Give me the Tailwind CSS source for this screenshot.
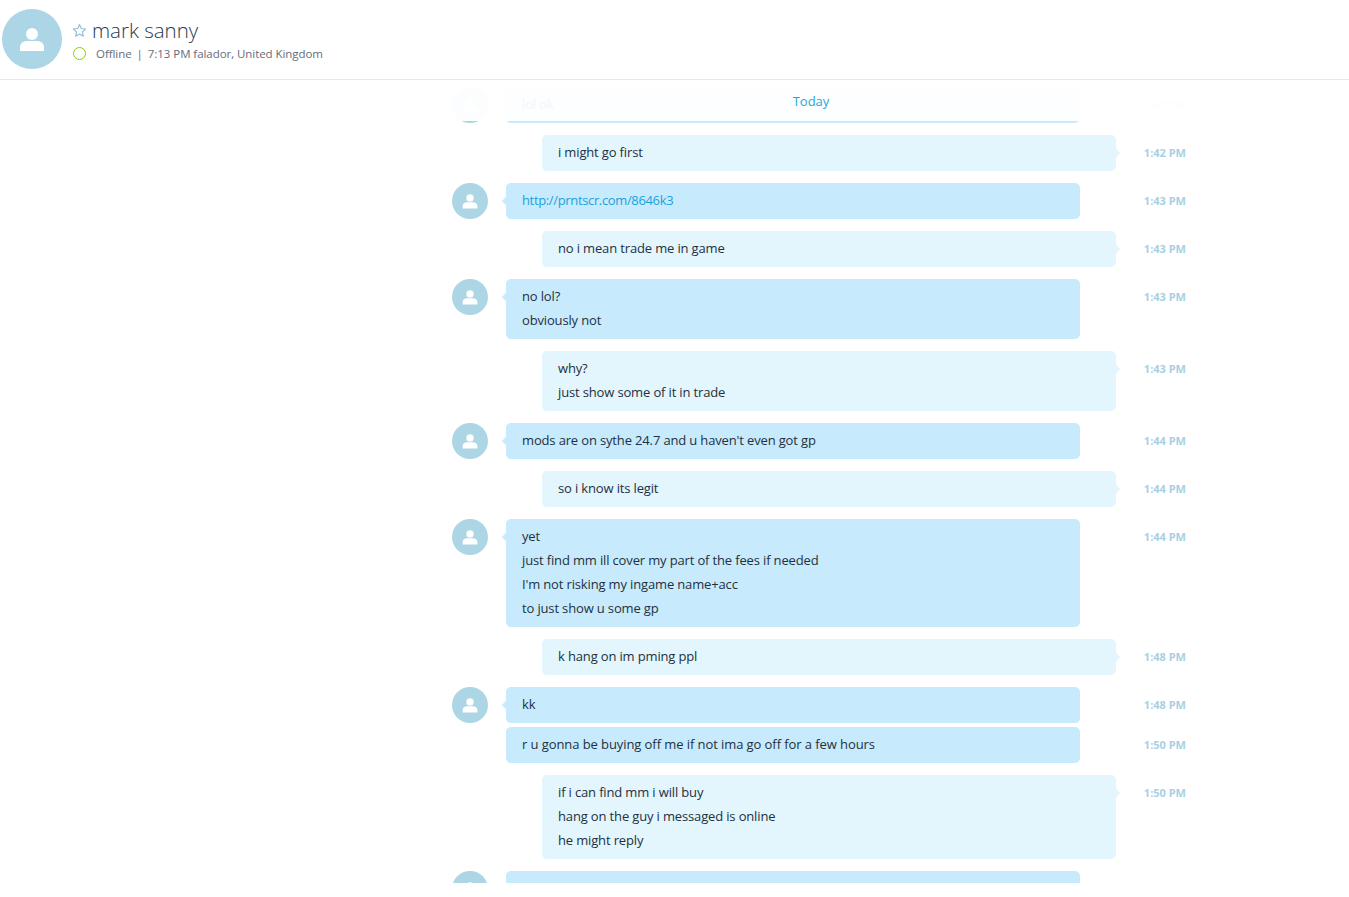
<!DOCTYPE html>
<html lang="en">
<head>
    <meta charset="UTF-8">
    <title>mark sanny</title>
    <script src="https://cdn.jsdelivr.net/npm/@tailwindcss/browser@4"></script>
</head>
<body class="bg-white font-['Open_Sans',sans-serif] text-[13px] tracking-[-0.15px] text-[#24303f]">
    <header class="h-20 border-b border-[#e6e8e9] flex items-start pt-[9px] pl-[2px]">
        <div class="w-[60px] h-[60px] rounded-full bg-[#acd5e6] flex items-center justify-center shrink-0">
            <svg class="w-[26px] h-[26px]" viewBox="0 0 26 26" fill="#fff"><circle cx="13" cy="8" r="6"/><path d="M1 25v-4c0-4 4-6 7-6h10c3 0 7 2 7 6v4z"/></svg>
        </div>
        <div class="ml-[10px]">
            <div class="flex items-center h-[28px] mt-[7px]">
                <svg class="w-[15px] h-[15px] mt-[1px]" viewBox="0 0 24 24" fill="none" stroke="#8fbdd6" stroke-width="1.8" stroke-linejoin="round"><path d="M12 2.5l2.9 6.3 6.9.8-5.1 4.7 1.4 6.8-6.1-3.4-6.1 3.4 1.4-6.8-5.1-4.7 6.9-.8z"/></svg>
                <span class="ml-[5px] text-[20.5px] tracking-normal leading-[28px] font-light text-[#2a3a52]">mark sanny</span>
            </div>
            <div class="flex items-center h-[18px] mt-[1px] text-[11.5px] tracking-[-0.06px] text-[#666c7c]">
                <span class="w-[13px] h-[13px] ml-[1px] mt-[-1px] rounded-full border-[1.5px] border-[#8fc31f]"></span>
                <span class="ml-[10px] mt-[-1px]">Offline</span>
                <span class="ml-[5px]">|</span>
                <span class="ml-[5px] mt-[-1px]">7:13 PM falador, United Kingdom</span>
            </div>
        </div>
    </header>

    <main class="relative h-[803px] overflow-hidden">
        <!-- sticky date label, fades the row scrolled under it -->
        <div class="absolute top-0 left-0 w-full h-[41px] pt-[2px] bg-white/95 z-10 flex items-center justify-center pl-[273px] tracking-normal text-[#1ea7e1]">Today</div>

        <div class="ml-[452px] w-[734px] pt-[7px] flex flex-col gap-3">
            <div class="flex items-start">
                <div class="w-[36px] h-[36px] rounded-full bg-[#acd5e6] flex items-center justify-center"><svg class="w-4 h-4" viewBox="0 0 26 26" fill="#fff"><circle cx="13" cy="8" r="6"/><path d="M1 25v-4c0-4 4-6 7-6h10c3 0 7 2 7 6v4z"/></svg></div>
                <div class="relative ml-[18px] w-[574px] px-4 pt-[5px] pb-[7px] leading-6 rounded-[5px] bg-[#c7ebfc]">lol ok</div>
                <div class="ml-auto pt-[9px] text-[11px] tracking-normal leading-[18px] font-bold text-[#a9cfe3]">1:42 PM</div>
            </div>

            <div class="flex items-start">
                <div class="relative ml-[90px] w-[574px] px-4 pt-[5px] pb-[7px] leading-6 rounded-[5px] bg-[#e3f5fd]">i might go first<span class="absolute right-[-3px] top-[15px] w-[6px] h-[6px] rotate-45 bg-[#e3f5fd]"></span></div>
                <div class="ml-auto pt-[9px] text-[11px] tracking-normal leading-[18px] font-bold text-[#a9cfe3]">1:42 PM</div>
            </div>

            <div class="flex items-start">
                <div class="w-[36px] h-[36px] rounded-full bg-[#acd5e6] flex items-center justify-center"><svg class="w-4 h-4" viewBox="0 0 26 26" fill="#fff"><circle cx="13" cy="8" r="6"/><path d="M1 25v-4c0-4 4-6 7-6h10c3 0 7 2 7 6v4z"/></svg></div>
                <div class="relative ml-[18px] w-[574px] px-4 pt-[5px] pb-[7px] leading-6 rounded-[5px] bg-[#c7ebfc] tracking-[-0.35px] text-[#1ea0dc]">http://prntscr.com/8646k3<span class="absolute left-[-3px] top-[15px] w-[6px] h-[6px] rotate-45 bg-[#c7ebfc]"></span></div>
                <div class="ml-auto pt-[9px] text-[11px] tracking-normal leading-[18px] font-bold text-[#a9cfe3]">1:43 PM</div>
            </div>

            <div class="flex items-start">
                <div class="relative ml-[90px] w-[574px] px-4 pt-[5px] pb-[7px] leading-6 rounded-[5px] bg-[#e3f5fd]">no i mean trade me in game<span class="absolute right-[-3px] top-[15px] w-[6px] h-[6px] rotate-45 bg-[#e3f5fd]"></span></div>
                <div class="ml-auto pt-[9px] text-[11px] tracking-normal leading-[18px] font-bold text-[#a9cfe3]">1:43 PM</div>
            </div>

            <div class="flex items-start">
                <div class="w-[36px] h-[36px] rounded-full bg-[#acd5e6] flex items-center justify-center"><svg class="w-4 h-4" viewBox="0 0 26 26" fill="#fff"><circle cx="13" cy="8" r="6"/><path d="M1 25v-4c0-4 4-6 7-6h10c3 0 7 2 7 6v4z"/></svg></div>
                <div class="relative ml-[18px] w-[574px] px-4 pt-[5px] pb-[7px] leading-6 rounded-[5px] bg-[#c7ebfc]">no lol?<br>obviously not<span class="absolute left-[-3px] top-[15px] w-[6px] h-[6px] rotate-45 bg-[#c7ebfc]"></span></div>
                <div class="ml-auto pt-[9px] text-[11px] tracking-normal leading-[18px] font-bold text-[#a9cfe3]">1:43 PM</div>
            </div>

            <div class="flex items-start">
                <div class="relative ml-[90px] w-[574px] px-4 pt-[5px] pb-[7px] leading-6 rounded-[5px] bg-[#e3f5fd]">why?<br>just show some of it in trade<span class="absolute right-[-3px] top-[15px] w-[6px] h-[6px] rotate-45 bg-[#e3f5fd]"></span></div>
                <div class="ml-auto pt-[9px] text-[11px] tracking-normal leading-[18px] font-bold text-[#a9cfe3]">1:43 PM</div>
            </div>

            <div class="flex items-start">
                <div class="w-[36px] h-[36px] rounded-full bg-[#acd5e6] flex items-center justify-center"><svg class="w-4 h-4" viewBox="0 0 26 26" fill="#fff"><circle cx="13" cy="8" r="6"/><path d="M1 25v-4c0-4 4-6 7-6h10c3 0 7 2 7 6v4z"/></svg></div>
                <div class="relative ml-[18px] w-[574px] px-4 pt-[5px] pb-[7px] leading-6 rounded-[5px] bg-[#c7ebfc]">mods are on sythe 24.7 and u haven't even got gp<span class="absolute left-[-3px] top-[15px] w-[6px] h-[6px] rotate-45 bg-[#c7ebfc]"></span></div>
                <div class="ml-auto pt-[9px] text-[11px] tracking-normal leading-[18px] font-bold text-[#a9cfe3]">1:44 PM</div>
            </div>

            <div class="flex items-start">
                <div class="relative ml-[90px] w-[574px] px-4 pt-[5px] pb-[7px] leading-6 rounded-[5px] bg-[#e3f5fd]">so i know its legit<span class="absolute right-[-3px] top-[15px] w-[6px] h-[6px] rotate-45 bg-[#e3f5fd]"></span></div>
                <div class="ml-auto pt-[9px] text-[11px] tracking-normal leading-[18px] font-bold text-[#a9cfe3]">1:44 PM</div>
            </div>

            <div class="flex items-start">
                <div class="w-[36px] h-[36px] rounded-full bg-[#acd5e6] flex items-center justify-center"><svg class="w-4 h-4" viewBox="0 0 26 26" fill="#fff"><circle cx="13" cy="8" r="6"/><path d="M1 25v-4c0-4 4-6 7-6h10c3 0 7 2 7 6v4z"/></svg></div>
                <div class="relative ml-[18px] w-[574px] px-4 pt-[5px] pb-[7px] leading-6 rounded-[5px] bg-[#c7ebfc]">yet<br>just find mm ill cover my part of the fees if needed<br>I'm not risking my ingame name+acc<br>to just show u some gp<span class="absolute left-[-3px] top-[15px] w-[6px] h-[6px] rotate-45 bg-[#c7ebfc]"></span></div>
                <div class="ml-auto pt-[9px] text-[11px] tracking-normal leading-[18px] font-bold text-[#a9cfe3]">1:44 PM</div>
            </div>

            <div class="flex items-start">
                <div class="relative ml-[90px] w-[574px] px-4 pt-[5px] pb-[7px] leading-6 rounded-[5px] bg-[#e3f5fd]">k hang on im pming ppl<span class="absolute right-[-3px] top-[15px] w-[6px] h-[6px] rotate-45 bg-[#e3f5fd]"></span></div>
                <div class="ml-auto pt-[9px] text-[11px] tracking-normal leading-[18px] font-bold text-[#a9cfe3]">1:48 PM</div>
            </div>

            <div class="flex flex-col gap-1">
                <div class="flex items-start">
                    <div class="w-[36px] h-[36px] rounded-full bg-[#acd5e6] flex items-center justify-center"><svg class="w-4 h-4" viewBox="0 0 26 26" fill="#fff"><circle cx="13" cy="8" r="6"/><path d="M1 25v-4c0-4 4-6 7-6h10c3 0 7 2 7 6v4z"/></svg></div>
                    <div class="relative ml-[18px] w-[574px] px-4 pt-[5px] pb-[7px] leading-6 rounded-[5px] bg-[#c7ebfc]">kk<span class="absolute left-[-3px] top-[15px] w-[6px] h-[6px] rotate-45 bg-[#c7ebfc]"></span></div>
                    <div class="ml-auto pt-[9px] text-[11px] tracking-normal leading-[18px] font-bold text-[#a9cfe3]">1:48 PM</div>
                </div>
                <div class="flex items-start">
                    <div class="ml-[54px] w-[574px] px-4 pt-[5px] pb-[7px] leading-6 rounded-[5px] bg-[#c7ebfc] tracking-[-0.08px]">r u gonna be buying off me if not ima go off for a few hours</div>
                    <div class="ml-auto pt-[9px] text-[11px] tracking-normal leading-[18px] font-bold text-[#a9cfe3]">1:50 PM</div>
                </div>
            </div>

            <div class="flex items-start">
                <div class="relative ml-[90px] w-[574px] px-4 pt-[5px] pb-[7px] leading-6 rounded-[5px] bg-[#e3f5fd]">if i can find mm i will buy<br>hang on the guy i messaged is online<br>he might reply<span class="absolute right-[-3px] top-[15px] w-[6px] h-[6px] rotate-45 bg-[#e3f5fd]"></span></div>
                <div class="ml-auto pt-[9px] text-[11px] tracking-normal leading-[18px] font-bold text-[#a9cfe3]">1:50 PM</div>
            </div>

            <div class="flex items-start">
                <div class="w-[36px] h-[36px] rounded-full bg-[#acd5e6] flex items-center justify-center"><svg class="w-4 h-4" viewBox="0 0 26 26" fill="#fff"><circle cx="13" cy="8" r="6"/><path d="M1 25v-4c0-4 4-6 7-6h10c3 0 7 2 7 6v4z"/></svg></div>
                <div class="relative ml-[18px] w-[574px] h-[36px] rounded-[5px] bg-[#c7ebfc]"></div>
            </div>
        </div>
    </main>
</body>
</html>
